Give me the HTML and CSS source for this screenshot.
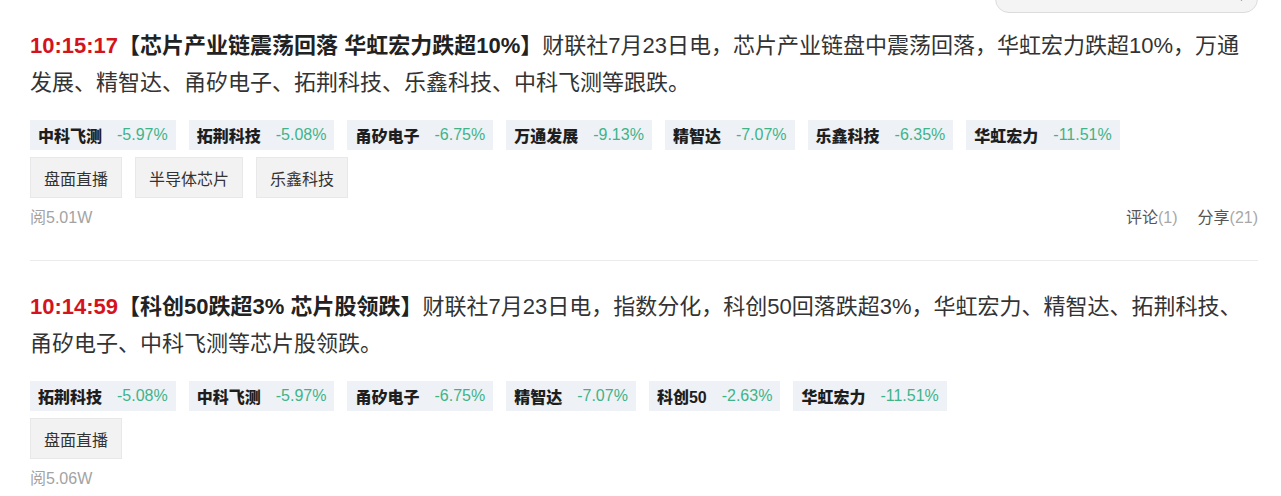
FILE: index.html
```html
<!DOCTYPE html>
<html lang="zh-CN">
<head>
    <meta charset="UTF-8">
    <meta name="viewport" content="width=device-width, initial-scale=1.0">
    <title>电报 - 财联社</title>
    <link rel="stylesheet" href="styles.css">
</head>
<body>
    <div class="page">
        <div class="topbar">
            <div class="search-box">
                <input type="text" class="search-input" placeholder="">
                <svg class="search-icon" width="16" height="16" viewBox="0 0 16 16">
                    <circle cx="7" cy="7" r="5" fill="none" stroke="#555" stroke-width="1.6"/>
                    <line x1="10.6" y1="10.6" x2="14.5" y2="14.5" stroke="#555" stroke-width="1.8" stroke-linecap="round"/>
                </svg>
            </div>
        </div>

        <div class="feed">
            <!-- 电报条目 -->
            <div class="item">
                <div class="content">
                    <span class="time">10:15:17</span><strong class="headline">【芯片产业链震荡回落 华虹宏力跌超10%】</strong>财联社7月23日电，芯片产业链盘中震荡回落，华虹宏力跌超10%，万通发展、精智达、甬矽电子、拓荆科技、乐鑫科技、中科飞测等跟跌。
                </div>
                <div class="stocks">
                    <span class="stock"><b>中科飞测</b><em>-5.97%</em></span>
                    <span class="stock"><b>拓荆科技</b><em>-5.08%</em></span>
                    <span class="stock"><b>甬矽电子</b><em>-6.75%</em></span>
                    <span class="stock"><b>万通发展</b><em>-9.13%</em></span>
                    <span class="stock"><b>精智达</b><em>-7.07%</em></span>
                    <span class="stock"><b>乐鑫科技</b><em>-6.35%</em></span>
                    <span class="stock"><b>华虹宏力</b><em>-11.51%</em></span>
                </div>
                <div class="subjects">
                    <a class="subject">盘面直播</a>
                    <a class="subject">半导体芯片</a>
                    <a class="subject">乐鑫科技</a>
                </div>
                <div class="meta">
                    <span class="reads">阅5.01W</span>
                    <span class="actions">
                        <a>评论<i>(1)</i></a>
                        <a>分享<i>(21)</i></a>
                    </span>
                </div>
            </div>

            <div class="item">
                <div class="content">
                    <span class="time">10:14:59</span><strong class="headline">【科创50跌超3% 芯片股领跌】</strong>财联社7月23日电，指数分化，科创50回落跌超3%，华虹宏力、精智达、拓荆科技、甬矽电子、中科飞测等芯片股领跌。
                </div>
                <div class="stocks">
                    <span class="stock"><b>拓荆科技</b><em>-5.08%</em></span>
                    <span class="stock"><b>中科飞测</b><em>-5.97%</em></span>
                    <span class="stock"><b>甬矽电子</b><em>-6.75%</em></span>
                    <span class="stock"><b>精智达</b><em>-7.07%</em></span>
                    <span class="stock"><b>科创50</b><em>-2.63%</em></span>
                    <span class="stock"><b>华虹宏力</b><em>-11.51%</em></span>
                </div>
                <div class="subjects">
                    <a class="subject">盘面直播</a>
                </div>
                <div class="meta">
                    <span class="reads">阅5.06W</span>
                </div>
            </div>
        </div>
    </div>
</body>
</html>
```

FILE: styles.css
```css
body {
    margin: 0;
    background-color: #ffffff;
    color: #333333;
    font-family: "Liberation Sans", "Noto Sans CJK SC", sans-serif;
}
.page {
    width: 1228px;
    padding-left: 30px;
}

/* search bar, page is scrolled so only its lower edge shows */
.topbar {
    display: flex;
    justify-content: flex-end;
    margin-top: -27px;
}
.search-box {
    display: flex;
    align-items: center;
    width: 263px;
    height: 40px;
    box-sizing: border-box;
    padding: 0 14px 0 16px;
    background-color: #f4f4f4;
    border: 1px solid #dcdcdc;
    border-radius: 14px;
}
.search-input {
    flex: 1;
    border: none;
    background: transparent;
    outline: none;
}

.item {
    padding: 27px 0 32px;
    border-bottom: 1px solid #ebebeb;
}
.item:first-child {
    padding-top: 14px;
}
.item:last-child {
    border-bottom: none;
}
.content {
    font-size: 22px;
    line-height: 37px;
    color: #333333;
}
.time {
    color: #d4141d;
    font-weight: bold;
}
.headline {
    color: #222222;
}

.stocks {
    display: flex;
    flex-wrap: wrap;
    gap: 13px;
    margin-top: 19px;
}
.stock {
    display: flex;
    align-items: center;
    gap: 15px;
    height: 30px;
    padding: 0 8px;
    background-color: #eef1f6;
    font-size: 16px;
}
.stock b {
    color: #1e1e1e;
    font-weight: 900;
}
.stock em {
    font-style: normal;
    color: #3fb489;
}

.subjects {
    display: flex;
    gap: 13px;
    margin-top: 7px;
}
.subject {
    display: flex;
    align-items: center;
    height: 41px;
    box-sizing: border-box;
    padding: 0 13px;
    background-color: #f2f2f2;
    border: 1px solid #e8e8e8;
    font-size: 16px;
    color: #333333;
}

.meta {
    display: flex;
    justify-content: space-between;
    margin-top: 10px;
    font-size: 16px;
    line-height: 20px;
}
.reads {
    color: #a3a3a3;
}
.actions {
    display: flex;
    gap: 20px;
}
.actions a {
    color: #555555;
}
.actions i {
    font-style: normal;
    color: #a8a8a8;
}
```
